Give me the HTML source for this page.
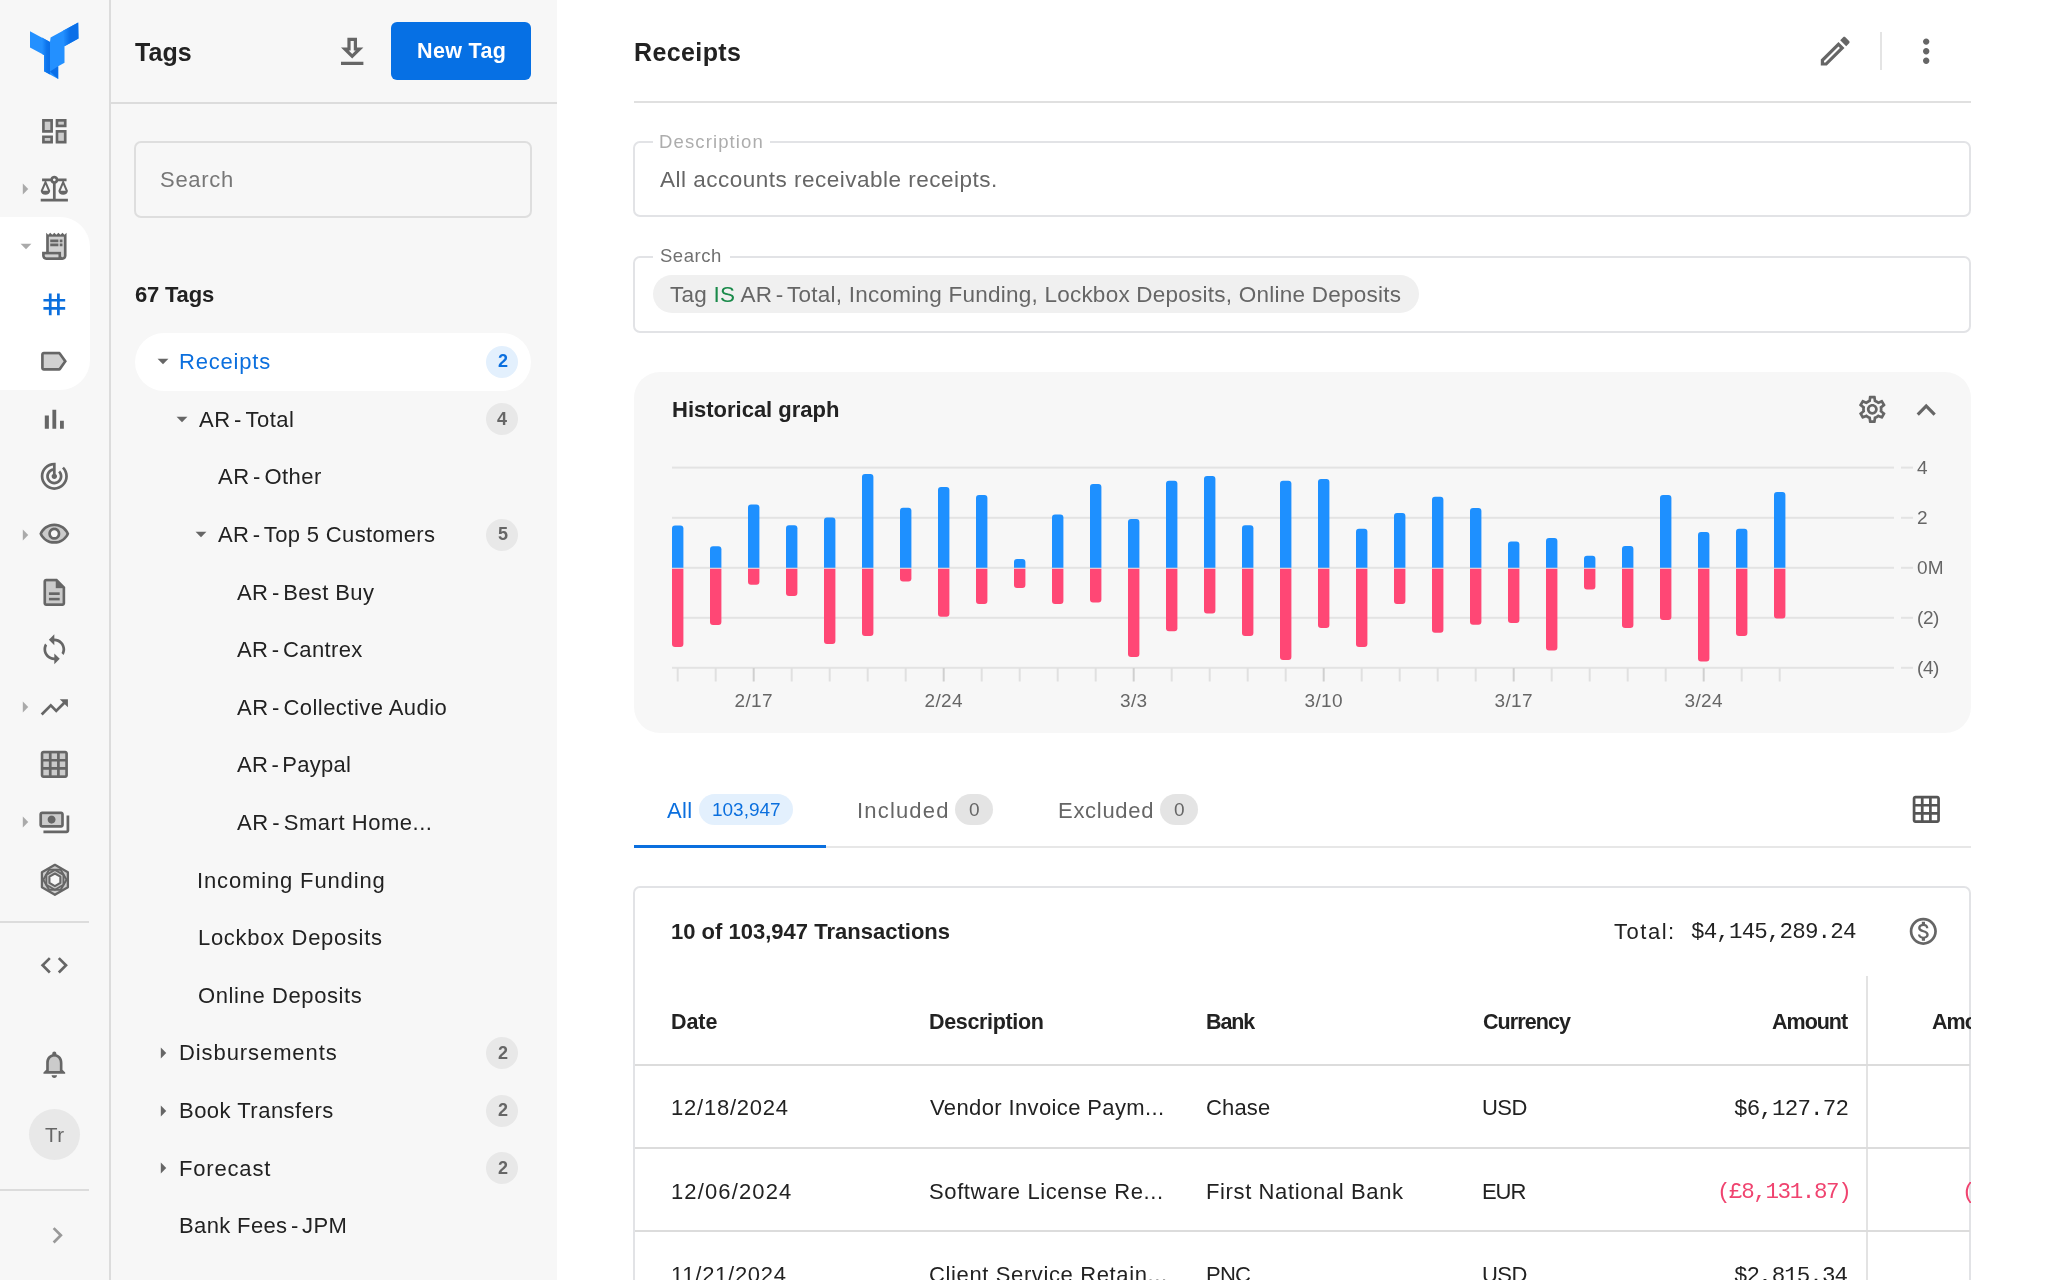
<!DOCTYPE html>
<html lang="en"><head><meta charset="utf-8"><title>Tags - Receipts</title>
<style>
html,body{margin:0;padding:0}
body{width:2048px;height:1280px;overflow:hidden;background:#fff;position:relative;font-family:"Liberation Sans",sans-serif;color:#222}
.abs,.t,.ic{position:absolute}
.t{white-space:nowrap;will-change:transform}
.ic{display:block}
#rail{left:0;top:0;width:109px;height:1280px;background:#f7f7f7}
#tags{left:111px;top:0;width:446px;height:1280px;background:#f7f7f7}
#vdiv{left:109px;top:0;width:2px;height:1280px;background:#dcdcdc}
.hl{background:#dcdcdc;height:2px}
.box{border:2px solid #e2e3e6;border-radius:7px;box-sizing:border-box}
.badge{width:32px;height:32px;border-radius:16px;background:#e8e8e8}
.badge.b{background:#e3f0fd}
.pill{border-radius:16px;height:31px}
</style></head><body>

<div id="rail" class="abs"></div><div id="tags" class="abs"></div><div id="vdiv" class="abs"></div>
<div class="abs" style="left:0;top:217px;width:90px;height:173px;background:#fff;border-radius:0 30px 30px 0"></div>
<svg class="ic" style="left:20px;top:10px;width:70px;height:80px" viewBox="20 10 70 80">
<polygon fill="#2390ff" points="50.6,37.6 78.2,22.4 78.5,38.4 64.5,46.2 64.5,62.8 58.2,66.3 58.2,78.9 44,71.3 44,55 30,47.5 30,31.2 50,41.9"/>
<defs><linearGradient id="lg1" x1="0" x2="1" y1="0" y2="0"><stop offset="0" stop-color="#2390ff"/><stop offset="0.45" stop-color="#0a6fe8"/><stop offset="1" stop-color="#0a6fe8"/></linearGradient>
<linearGradient id="lg2" x1="0" x2="1" y1="0" y2="0"><stop offset="0" stop-color="#2390ff"/><stop offset="0.6" stop-color="#0d74ec"/><stop offset="1" stop-color="#0a6fe8"/></linearGradient></defs>
<polygon fill="url(#lg1)" points="63,30.8 78.2,22.4 78.5,38.4 64.5,46.2"/>
<polygon fill="url(#lg2)" points="42,37.6 50,41.9 50,74.5 44,71.3 44,55 42,54"/>
<polygon fill="#0a6fe8" points="50,71.6 58.2,66.3 58.2,78.9"/>
</svg>
<svg class="ic" style="left:37.93px;top:114.93px;width:32.64px;height:32.64px" viewBox="0 0 24 24" fill="#666"><g opacity="0.3"><path d="M5 5h4v6H5zm10 8h4v6h-4zM5 17h4v2H5zM15 5h4v2h-4z"/></g><path d="M19 5v2h-4V5h4M9 5v6H5V5h4m10 8v6h-4v-6h4M9 17v2H5v-2h4M21 3h-8v6h8V3zM11 3H3v10h8V3zm10 8h-8v10h8V11zm-10 4H3v6h8v-6z"/></svg>
<svg class="ic" style="left:38.08px;top:172.58px;width:32.64px;height:32.64px" viewBox="0 0 24 24" fill="#666"><path d="M13 7.83c.85-.3 1.53-.98 1.83-1.83H18l-3 7c0 1.66 1.57 3 3.5 3s3.500-1.340 3.500-3l-3-7h2V4h-6.170c-.410-1.170-1.520-2-2.830-2s-2.420.830-2.830 2H3v2h2l-3 7c0 1.660 1.570 3 3.500 3S9 14.660 9 13L6 6h3.170c.3.850.980 1.530 1.830 1.830V19H2v2h20v-2h-9V7.830zM20.370 13h-3.740l1.870-4.360L20.370 13zm-13 0H3.630L5.500 8.640 7.370 13zM12 6c-.550 0-1-.450-1-1s.450-1 1-1 1 .450 1 1-.450 1-1 1z"/></svg>
<svg class="ic" style="left:11.66px;top:175.75px;width:26px;height:26px" viewBox="0 0 24 24" fill="#aaa"><path d="M10 17l5-5-5-5v10z"/></svg>
<svg class="ic" style="left:37.93px;top:230.18px;width:32.64px;height:32.64px" viewBox="0 0 24 24" fill="#666"><g opacity="0.3"><path d="M15 20H6c-.550 0-1-.450-1-1v-1h10v2zM8 5v11h9v3c0 .550.450 1 1 1s1-.450 1-1V5H8z"/></g><path d="M19.500 3.500L18 2l-1.500 1.500L15 2l-1.500 1.500L12 2l-1.500 1.500L9 2 7.500 3.500 6 2v14H3v3c0 1.660 1.340 3 3 3h12c1.660 0 3-1.340 3-3V2l-1.500 1.500zM15 20H6c-.550 0-1-.450-1-1v-1h10v2zm4-1c0 .550-.450 1-1 1s-1-.450-1-1v-3H8V5h11v14z"/><path d="M9 7h6v2H9zM16 7h2v2h-2zM9 10h6v2H9zM16 10h2v2h-2z"/></svg>
<svg class="ic" style="left:12.50px;top:232.96px;width:26px;height:26px" viewBox="0 0 24 24" fill="#aaa"><path d="M7 10l5 5 5-5z"/></svg>
<svg class="ic" style="left:38.28px;top:287.78px;width:32.64px;height:32.64px" viewBox="0 0 24 24" fill="#0b6fde"><path d="M20 10V8h-4V4h-2v4h-4V4H8v4H4v2h4v4H4v2h4v4h2v-4h4v4h2v-4h4v-2h-4v-4h4zm-6 4h-4v-4h4v4z"/></svg>
<svg class="ic" style="left:37.38px;top:344.93px;width:32.64px;height:32.64px" viewBox="0 0 24 24" fill="#666"><g opacity="0.3"><path d="M16 7H5v10h11l3.550-5z"/></g><path d="M17.630 5.840C17.270 5.330 16.670 5 16 5L5 5.010C3.900 5.010 3 5.900 3 7v10c0 1.100.9 1.990 2 1.990L16 19c.670 0 1.270-.330 1.630-.840L22 12l-4.370-6.160zM16 17H5V7h11l3.550 5L16 17z"/></svg>
<svg class="ic" style="left:38.08px;top:402.78px;width:32.64px;height:32.64px" viewBox="0 0 24 24" fill="#666"><path d="M5 9.200h3V19H5zM10.600 5h2.800v14h-2.800zm5.600 8H19v6h-2.800z"/></svg>
<svg class="ic" style="left:38.08px;top:460.28px;width:32.64px;height:32.64px" viewBox="0 0 24 24" fill="#666"><path d="M19.070 4.930l-1.410 1.410C19.100 7.790 20 9.790 20 12c0 4.420-3.580 8-8 8s-8-3.580-8-8c0-4.080 3.050-7.440 7-7.930v2.020C8.160 6.570 6 9.030 6 12c0 3.310 2.690 6 6 6s6-2.690 6-6c0-1.660-.670-3.160-1.760-4.240l-1.410 1.410C15.550 9.900 16 10.900 16 12c0 2.210-1.790 4-4 4s-4-1.790-4-4c0-1.860 1.280-3.410 3-3.860v2.140c-.6.350-1 .980-1 1.720 0 1.100.9 2 2 2s2-.9 2-2c0-.740-.4-1.380-1-1.720V2h-1C6.480 2 2 6.480 2 12s4.480 10 10 10 10-4.480 10-10c0-2.760-1.120-5.260-2.930-7.070z"/></svg>
<svg class="ic" style="left:38.08px;top:518.38px;width:32.64px;height:32.64px" viewBox="0 0 24 24" fill="#666"><g opacity="0.3"><path d="M12 6c-3.790 0-7.170 2.130-8.820 5.500C4.830 14.870 8.210 17 12 17s7.170-2.130 8.820-5.500C19.170 8.130 15.790 6 12 6zm0 10c-2.480 0-4.500-2.020-4.500-4.500S9.520 7 12 7s4.500 2.020 4.500 4.500S14.480 16 12 16z"/></g><path d="M12 6c3.790 0 7.170 2.130 8.820 5.500C19.170 14.870 15.790 17 12 17s-7.170-2.130-8.820-5.500C4.830 8.130 8.210 6 12 6m0-2C7 4 2.730 7.110 1 11.500 2.730 15.890 7 19 12 19s9.270-3.110 11-7.500C21.270 7.110 17 4 12 4zm0 5c1.380 0 2.500 1.120 2.500 2.500S13.380 14 12 14s-2.500-1.120-2.500-2.500S10.620 9 12 9m0-2c-2.480 0-4.500 2.020-4.500 4.500S9.520 16 12 16s4.500-2.020 4.500-4.500S14.480 7 12 7z"/></svg>
<svg class="ic" style="left:11.66px;top:521.70px;width:26px;height:26px" viewBox="0 0 24 24" fill="#aaa"><path d="M10 17l5-5-5-5v10z"/></svg>
<svg class="ic" style="left:38.28px;top:575.78px;width:32.64px;height:32.64px" viewBox="0 0 24 24" fill="#666"><g opacity="0.3"><path d="M13 4H6v16h12V9h-5V4zm3 14H8v-2h8v2zm0-6v2H8v-2h8z"/></g><path d="M8 16h8v2H8zm0-4h8v2H8zm6-10H6c-1.100 0-2 .9-2 2v16c0 1.100.890 2 1.990 2H18c1.100 0 2-.9 2-2V8l-6-6zm4 18H6V4h7v5h5v11z"/></svg>
<svg class="ic" style="left:38.08px;top:633.43px;width:32.64px;height:32.64px" viewBox="0 0 24 24" fill="#666"><path d="M12 4V1L8 5l4 4V6c3.310 0 6 2.690 6 6 0 1.010-.250 1.970-.7 2.800l1.460 1.460C19.540 15.030 20 13.570 20 12c0-4.420-3.580-8-8-8zm0 14c-3.310 0-6-2.690-6-6 0-1.010.250-1.970.7-2.800L5.240 7.740C4.460 8.970 4 10.430 4 12c0 4.420 3.580 8 8 8v3l4-4-4-4v3z"/></svg>
<svg class="ic" style="left:38.08px;top:690.58px;width:32.64px;height:32.64px" viewBox="0 0 24 24" fill="#666"><path d="M16 6l2.290 2.290-4.880 4.880-4-4L2 16.590 3.410 18l6-6 4 4 6.300-6.290L22 12V6z"/></svg>
<svg class="ic" style="left:11.66px;top:693.90px;width:26px;height:26px" viewBox="0 0 24 24" fill="#aaa"><path d="M10 17l5-5-5-5v10z"/></svg>
<svg class="ic" style="left:38.08px;top:748.43px;width:32.64px;height:32.64px" viewBox="0 0 24 24" fill="#666"><g opacity="0.3"><path d="M4 4h16v16H4z"/></g><path d="M20 2H4c-1.100 0-2 .9-2 2v16c0 1.100.9 2 2 2h16c1.100 0 2-.9 2-2V4c0-1.100-.9-2-2-2zM8 20H4v-4h4v4zm0-6H4v-4h4v4zm0-6H4V4h4v4zm6 12h-4v-4h4v4zm0-6h-4v-4h4v4zm0-6h-4V4h4v4zm6 12h-4v-4h4v4zm0-6h-4v-4h4v4zm0-6h-4V4h4v4z"/></svg>
<svg class="ic" style="left:38.18px;top:805.78px;width:32.64px;height:32.64px" viewBox="0 0 24 24" fill="#666"><g opacity="0.3"><path d="M17 6H3v8h14V6zm-7 7c-1.660 0-3-1.340-3-3s1.340-3 3-3 3 1.340 3 3-1.340 3-3 3z"/></g><path d="M19 14V6c0-1.100-.9-2-2-2H3c-1.100 0-2 .9-2 2v8c0 1.100.9 2 2 2h14c1.100 0 2-.9 2-2zm-2 0H3V6h14v8zm-7-7c-1.660 0-3 1.340-3 3s1.340 3 3 3 3-1.340 3-3-1.340-3-3-3zm13 0v11c0 1.100-.9 2-2 2H4v-2h17V7h2z"/></svg>
<svg class="ic" style="left:11.66px;top:809.10px;width:26px;height:26px" viewBox="0 0 24 24" fill="#aaa"><path d="M10 17l5-5-5-5v10z"/></svg>
<svg class="ic" style="left:34px;top:859px;width:42px;height:42px" viewBox="34 859 42 42"><polygon points="67.89,887.30 54.90,894.80 41.91,887.30 41.91,872.30 54.90,864.80 67.89,872.30" fill="#666" fill-opacity="0.3" stroke="#666" stroke-width="2.3" stroke-linejoin="round"/><polygon points="66.50,879.80 60.70,889.85 49.10,889.85 43.30,879.80 49.10,869.75 60.70,869.75" fill="none" stroke="#666" stroke-width="2" stroke-linejoin="round"/><polygon points="63.47,884.75 54.90,889.70 46.33,884.75 46.33,874.85 54.90,869.90 63.47,874.85" fill="none" stroke="#666" stroke-width="1.9" stroke-linejoin="round"/><polygon points="60.36,882.95 54.90,886.10 49.44,882.95 49.44,876.65 54.90,873.50 60.36,876.65" fill="#f7f7f7" stroke="#666" stroke-width="2.1" stroke-linejoin="round"/></svg>
<div class="abs hl" style="left:0;top:921px;width:89px"></div>
<svg class="ic" style="left:37.98px;top:948.68px;width:32.64px;height:32.64px" viewBox="0 0 24 24" fill="#666"><path d="M9.400 16.600L4.800 12l4.600-4.600L8 6l-6 6 6 6 1.400-1.400zm5.200 0l4.600-4.600-4.600-4.600L16 6l6 6-6 6-1.400-1.400z"/></svg>
<svg class="ic" style="left:38.18px;top:1047.88px;width:32.64px;height:32.64px" viewBox="0 0 24 24" fill="#666"><g opacity="0.3"><path d="M12 6.500c-2.490 0-4 2.020-4 4.500v6h8v-6c0-2.480-1.510-4.500-4-4.500z"/></g><path d="M12 22c1.100 0 2-.9 2-2h-4c0 1.100.9 2 2 2zm6-6v-5c0-3.070-1.630-5.640-4.500-6.320V4c0-.830-.670-1.500-1.500-1.500s-1.500.670-1.500 1.500v.680C7.640 5.360 6 7.920 6 11v5l-2 2v1h16v-1l-2-2zm-2 1H8v-6c0-2.480 1.510-4.500 4-4.500s4 2.020 4 4.500v6z"/></svg>
<div class="abs" style="left:28.8px;top:1108.7px;width:51.4px;height:51.4px;border-radius:26px;background:#e8e8e8"></div>
<div class="t" style="left:44.50px;top:1121.40px;font:400 20.5px/27px 'Liberation Sans', sans-serif;color:#666;letter-spacing:0.539px;">Tr</div>
<div class="abs hl" style="left:0;top:1188.5px;width:89px"></div>
<svg class="ic" style="left:40.88px;top:1219.18px;width:32.64px;height:32.64px" viewBox="0 0 24 24" fill="#999"><path d="M10 6L8.590 7.410 13.170 12l-4.580 4.590L10 18l6-6z"/></svg>
<div class="t" style="left:134.60px;top:35.74px;font:700 25px/32px 'Liberation Sans', sans-serif;color:#222;letter-spacing:0.070px;">Tags</div>
<svg class="ic" style="left:332.70px;top:32.80px;width:38.4px;height:38.4px" viewBox="0 0 24 24" fill="#666"><path d="M19 9h-4V3H9v6H5l7 7 7-7zm-8 2V5h2v6h1.170L12 13.170 9.830 11H11zm-6 7h14v2H5z"/></svg>
<div class="abs" style="left:390.5px;top:22.4px;width:140.7px;height:57.4px;border-radius:6px;background:#0670e4"></div>
<div class="t" style="left:416.60px;top:37.45px;font:700 21.5px/28px 'Liberation Sans', sans-serif;color:#fff;letter-spacing:0.354px;">New Tag</div>
<div class="abs hl" style="left:110px;top:102px;width:447px"></div>
<div class="abs box" style="left:134px;top:141px;width:398px;height:77px;border-color:#dedede"></div>
<div class="t" style="left:159.50px;top:165.08px;font:400 22px/29px 'Liberation Sans', sans-serif;color:#777;letter-spacing:0.706px;">Search</div>
<div class="t" style="left:135.00px;top:280.18px;font:700 22px/29px 'Liberation Sans', sans-serif;color:#222;letter-spacing:-0.194px;">67 Tags</div>
<div class="abs" style="left:134.6px;top:332.8px;width:396.6px;height:58px;border-radius:29px;background:#fff"></div>
<div class="t" style="left:179.30px;top:347.08px;font:400 22px/29px 'Liberation Sans', sans-serif;color:#0b6fde;letter-spacing:0.815px;">Receipts</div>
<svg class="ic" style="left:150.00px;top:348.30px;width:26px;height:26px" viewBox="0 0 24 24" fill="#666"><path d="M7 10l5 5 5-5z"/></svg>
<div class="abs badge b" style="left:486.2px;top:345.70px"></div>
<div class="t" style="left:497.70px;top:350.46px;font:700 18px/23px 'Liberation Sans', sans-serif;color:#0b6fde;letter-spacing:0.000px;">2</div>
<div class="t" style="left:199.30px;top:404.69px;font:400 22px/29px 'Liberation Sans', sans-serif;color:#222;letter-spacing:0.478px;">AR<span style="word-spacing:-3px"> - </span>Total</div>
<svg class="ic" style="left:169.00px;top:405.91px;width:26px;height:26px" viewBox="0 0 24 24" fill="#666"><path d="M7 10l5 5 5-5z"/></svg>
<div class="abs badge" style="left:486.2px;top:403.31px"></div>
<div class="t" style="left:497.20px;top:408.07px;font:700 18px/23px 'Liberation Sans', sans-serif;color:#666;letter-spacing:0.000px;">4</div>
<div class="t" style="left:218.30px;top:462.30px;font:400 22px/29px 'Liberation Sans', sans-serif;color:#222;letter-spacing:0.466px;">AR<span style="word-spacing:-3px"> - </span>Other</div>
<div class="t" style="left:218.30px;top:519.91px;font:400 22px/29px 'Liberation Sans', sans-serif;color:#222;letter-spacing:0.347px;">AR<span style="word-spacing:-3px"> - </span>Top 5 Customers</div>
<svg class="ic" style="left:188.00px;top:521.13px;width:26px;height:26px" viewBox="0 0 24 24" fill="#666"><path d="M7 10l5 5 5-5z"/></svg>
<div class="abs badge" style="left:486.2px;top:518.53px"></div>
<div class="t" style="left:497.70px;top:523.29px;font:700 18px/23px 'Liberation Sans', sans-serif;color:#666;letter-spacing:0.000px;">5</div>
<div class="t" style="left:237.30px;top:577.52px;font:400 22px/29px 'Liberation Sans', sans-serif;color:#222;letter-spacing:0.404px;">AR<span style="word-spacing:-3px"> - </span>Best Buy</div>
<div class="t" style="left:237.30px;top:635.13px;font:400 22px/29px 'Liberation Sans', sans-serif;color:#222;letter-spacing:0.378px;">AR<span style="word-spacing:-3px"> - </span>Cantrex</div>
<div class="t" style="left:237.30px;top:692.74px;font:400 22px/29px 'Liberation Sans', sans-serif;color:#222;letter-spacing:0.459px;">AR<span style="word-spacing:-3px"> - </span>Collective Audio</div>
<div class="t" style="left:237.30px;top:750.35px;font:400 22px/29px 'Liberation Sans', sans-serif;color:#222;letter-spacing:0.241px;">AR<span style="word-spacing:-3px"> - </span>Paypal</div>
<div class="t" style="left:237.30px;top:807.96px;font:400 22px/29px 'Liberation Sans', sans-serif;color:#222;letter-spacing:0.529px;">AR<span style="word-spacing:-3px"> - </span>Smart Home...</div>
<div class="t" style="left:197.30px;top:865.57px;font:400 22px/29px 'Liberation Sans', sans-serif;color:#222;letter-spacing:0.857px;">Incoming Funding</div>
<div class="t" style="left:198.30px;top:923.18px;font:400 22px/29px 'Liberation Sans', sans-serif;color:#222;letter-spacing:0.690px;">Lockbox Deposits</div>
<div class="t" style="left:198.30px;top:980.79px;font:400 22px/29px 'Liberation Sans', sans-serif;color:#222;letter-spacing:0.607px;">Online Deposits</div>
<div class="t" style="left:179.30px;top:1038.40px;font:400 22px/29px 'Liberation Sans', sans-serif;color:#222;letter-spacing:0.915px;">Disbursements</div>
<svg class="ic" style="left:149.50px;top:1040.12px;width:26px;height:26px" viewBox="0 0 24 24" fill="#666"><path d="M10 17l5-5-5-5v10z"/></svg>
<div class="abs badge" style="left:486.2px;top:1037.02px"></div>
<div class="t" style="left:497.70px;top:1041.78px;font:700 18px/23px 'Liberation Sans', sans-serif;color:#666;letter-spacing:0.000px;">2</div>
<div class="t" style="left:179.30px;top:1096.01px;font:400 22px/29px 'Liberation Sans', sans-serif;color:#222;letter-spacing:0.481px;">Book Transfers</div>
<svg class="ic" style="left:149.50px;top:1097.73px;width:26px;height:26px" viewBox="0 0 24 24" fill="#666"><path d="M10 17l5-5-5-5v10z"/></svg>
<div class="abs badge" style="left:486.2px;top:1094.63px"></div>
<div class="t" style="left:497.70px;top:1099.39px;font:700 18px/23px 'Liberation Sans', sans-serif;color:#666;letter-spacing:0.000px;">2</div>
<div class="t" style="left:179.30px;top:1153.62px;font:400 22px/29px 'Liberation Sans', sans-serif;color:#222;letter-spacing:0.818px;">Forecast</div>
<svg class="ic" style="left:149.50px;top:1155.34px;width:26px;height:26px" viewBox="0 0 24 24" fill="#666"><path d="M10 17l5-5-5-5v10z"/></svg>
<div class="abs badge" style="left:486.2px;top:1152.24px"></div>
<div class="t" style="left:497.70px;top:1157.00px;font:700 18px/23px 'Liberation Sans', sans-serif;color:#666;letter-spacing:0.000px;">2</div>
<div class="t" style="left:179.30px;top:1211.23px;font:400 22px/29px 'Liberation Sans', sans-serif;color:#222;letter-spacing:0.365px;">Bank Fees<span style="word-spacing:-3px"> - </span>JPM</div>
<div class="t" style="left:633.50px;top:36.34px;font:700 25px/32px 'Liberation Sans', sans-serif;color:#222;letter-spacing:0.385px;">Receipts</div>
<svg class="ic" style="left:1816.40px;top:32.05px;width:38.4px;height:38.4px" viewBox="0 0 24 24" fill="#666"><path d="M14.060 9.020l.920.920L5.920 19H5v-.920l9.060-9.060M17.660 3c-.250 0-.510.100-.7.290l-1.830 1.830 3.750 3.750 1.830-1.830c.390-.390.390-1.020 0-1.410l-2.340-2.340c-.200-.200-.450-.290-.710-.290zm-3.600 3.190L3 17.250V21h3.750L17.810 9.940l-3.750-3.750z"/></svg>
<div class="abs" style="left:1880px;top:32px;width:2px;height:38px;background:#e4e4e4"></div>
<svg class="ic" style="left:1907.20px;top:31.85px;width:38.4px;height:38.4px" viewBox="0 0 24 24" fill="#666"><path d="M12 8c1.100 0 2-.9 2-2s-.9-2-2-2-2 .9-2 2 .9 2 2 2zm0 2c-1.100 0-2 .9-2 2s.9 2 2 2 2-.9 2-2-.9-2-2-2zm0 6c-1.100 0-2 .9-2 2s.9 2 2 2 2-.9 2-2-.9-2-2-2z"/></svg>
<div class="abs hl" style="left:634px;top:101px;width:1337px;background:#e0e0e0"></div>
<div class="abs box" style="left:633px;top:141px;width:1338px;height:76px"></div>
<div class="abs" style="left:653px;top:139px;width:117px;height:6px;background:#fff"></div>
<div class="t" style="left:658.90px;top:130.49px;font:400 18.5px/24px 'Liberation Sans', sans-serif;color:#adadad;letter-spacing:1.125px;">Description</div>
<div class="t" style="left:659.70px;top:165.10px;font:400 22.5px/29px 'Liberation Sans', sans-serif;color:#666;letter-spacing:0.495px;">All accounts receivable receipts.</div>
<div class="abs box" style="left:633px;top:256px;width:1338px;height:77px"></div>
<div class="abs" style="left:653px;top:254px;width:77px;height:6px;background:#fff"></div>
<div class="t" style="left:660.30px;top:244.19px;font:400 18.5px/24px 'Liberation Sans', sans-serif;color:#707070;letter-spacing:0.534px;">Search</div>
<div class="abs" style="left:653px;top:275.3px;width:766px;height:38px;border-radius:19px;background:#f0f0f0"></div>
<div class="t" style="left:670.00px;top:280.30px;font:400 22.5px/29px 'Liberation Sans', sans-serif;color:#666;letter-spacing:0.241px;">Tag <span style="color:#1a8a4a">IS</span> AR<span style="word-spacing:-3px"> - </span>Total, Incoming Funding, Lockbox Deposits, Online Deposits</div>
<div class="abs" style="left:634px;top:372px;width:1337px;height:360.5px;border-radius:26px;background:#f7f7f7"></div>
<div class="t" style="left:672.00px;top:395.28px;font:700 22px/29px 'Liberation Sans', sans-serif;color:#222;letter-spacing:-0.003px;">Historical graph</div>
<svg class="ic" style="left:1855.78px;top:393.28px;width:32.64px;height:32.64px" viewBox="0 0 24 24" fill="#666"><path d="M19.430 12.980c.040-.320.070-.640.070-.980 0-.340-.030-.660-.070-.980l2.110-1.650c.190-.150.240-.420.120-.640l-2-3.460c-.090-.160-.260-.250-.440-.250-.060 0-.120.010-.170.030l-2.490 1c-.520-.400-1.080-.730-1.690-.980l-.380-2.650C14.460 2.180 14.250 2 14 2h-4c-.250 0-.460.180-.490.420l-.380 2.650c-.610.250-1.170.590-1.690.980l-2.490-1c-.060-.020-.120-.030-.180-.030-.170 0-.340.090-.430.250l-2 3.460c-.130.220-.070.490.120.640l2.110 1.650c-.040.320-.070.650-.07.980 0 .330.030.660.070.980l-2.110 1.650c-.190.150-.240.420-.120.640l2 3.460c.090.160.260.250.440.250.060 0 .120-.010.170-.030l2.490-1c.520.400 1.080.730 1.690.980l.380 2.650c.030.240.240.420.490.420h4c.250 0 .460-.180.490-.420l.380-2.650c.610-.250 1.170-.590 1.690-.980l2.490 1c.060.020.120.030.180.030.170 0 .340-.090.430-.250l2-3.460c.120-.220.070-.490-.120-.640l-2.110-1.650zm-1.980-1.710c.040.310.050.520.050.730 0 .210-.020.430-.050.730l-.140 1.130.890.700 1.080.840-.7 1.210-1.270-.510-1.040-.420-.9.680c-.430.320-.840.560-1.250.730l-1.060.430-.160 1.130-.200 1.350h-1.400l-.190-1.350-.160-1.130-1.060-.430c-.430-.180-.830-.410-1.230-.710l-.910-.7-1.060.430-1.270.510-.7-1.210 1.080-.840.890-.7-.140-1.130c-.030-.310-.050-.540-.050-.740s.020-.430.050-.730l.140-1.130-.890-.7-1.080-.840.7-1.210 1.270.510 1.040.420.900-.680c.430-.320.840-.560 1.250-.730l1.060-.430.160-1.130.200-1.350h1.390l.190 1.350.160 1.130 1.060.430c.430.180.830.410 1.230.710l.910.700 1.060-.430 1.270-.510.7 1.210-1.070.850-.890.700.140 1.130zM12 8c-2.210 0-4 1.790-4 4s1.790 4 4 4 4-1.790 4-4-1.790-4-4-4zm0 6c-1.100 0-2-.9-2-2s.9-2 2-2 2 .9 2 2-.9 2-2 2z"/></svg>
<svg class="ic" style="left:1907.20px;top:390.90px;width:38.4px;height:38.4px" viewBox="0 0 24 24" fill="#666"><path d="M12 8l-6 6 1.410 1.410L12 10.830l4.590 4.580L18 14z"/></svg>
<svg class="ic" style="left:634px;top:372px;width:1337px;height:360px" viewBox="634 372 1337 360">
<rect x="672" y="466.6" width="1222" height="2" fill="#e3e3e3"/>
<rect x="1901" y="466.6" width="12" height="2" fill="#e3e3e3"/>
<rect x="672" y="516.8" width="1222" height="2" fill="#e3e3e3"/>
<rect x="1901" y="516.8" width="12" height="2" fill="#e3e3e3"/>
<rect x="672" y="566.8" width="1222" height="2" fill="#e3e3e3"/>
<rect x="1901" y="566.8" width="12" height="2" fill="#e3e3e3"/>
<rect x="672" y="616.8" width="1222" height="2" fill="#e3e3e3"/>
<rect x="1901" y="616.8" width="12" height="2" fill="#e3e3e3"/>
<rect x="672" y="666.8" width="1222" height="2" fill="#e3e3e3"/>
<rect x="1901" y="666.8" width="12" height="2" fill="#e3e3e3"/>
<rect x="676.7" y="668" width="2" height="13.5" fill="#e0e0e0"/>
<path fill="#1e90ff" d="M672.0 567.7V528.6a3 3 0 0 1 3 -3h5.4a3 3 0 0 1 3 3V567.7z"/>
<path fill="#ff4775" d="M672.0 568.7V644.1a3 3 0 0 0 3 3h5.4a3 3 0 0 0 3 -3V568.7z"/>
<rect x="714.7" y="668" width="2" height="13.5" fill="#e0e0e0"/>
<path fill="#1e90ff" d="M710.0 567.7V549.2a3 3 0 0 1 3 -3h5.4a3 3 0 0 1 3 3V567.7z"/>
<path fill="#ff4775" d="M710.0 568.7V622.0a3 3 0 0 0 3 3h5.4a3 3 0 0 0 3 -3V568.7z"/>
<rect x="752.7" y="668" width="2" height="13.5" fill="#d0d0d0"/>
<path fill="#1e90ff" d="M748.0 567.7V507.6a3 3 0 0 1 3 -3h5.4a3 3 0 0 1 3 3V567.7z"/>
<path fill="#ff4775" d="M748.0 568.7V581.7a3 3 0 0 0 3 3h5.4a3 3 0 0 0 3 -3V568.7z"/>
<rect x="790.7" y="668" width="2" height="13.5" fill="#e0e0e0"/>
<path fill="#1e90ff" d="M786.0 567.7V528.2a3 3 0 0 1 3 -3h5.4a3 3 0 0 1 3 3V567.7z"/>
<path fill="#ff4775" d="M786.0 568.7V593.0a3 3 0 0 0 3 3h5.4a3 3 0 0 0 3 -3V568.7z"/>
<rect x="828.7" y="668" width="2" height="13.5" fill="#e0e0e0"/>
<path fill="#1e90ff" d="M824.0 567.7V520.4a3 3 0 0 1 3 -3h5.4a3 3 0 0 1 3 3V567.7z"/>
<path fill="#ff4775" d="M824.0 568.7V641.0a3 3 0 0 0 3 3h5.4a3 3 0 0 0 3 -3V568.7z"/>
<rect x="866.7" y="668" width="2" height="13.5" fill="#e0e0e0"/>
<path fill="#1e90ff" d="M862.0 567.7V477.0a3 3 0 0 1 3 -3h5.4a3 3 0 0 1 3 3V567.7z"/>
<path fill="#ff4775" d="M862.0 568.7V633.0a3 3 0 0 0 3 3h5.4a3 3 0 0 0 3 -3V568.7z"/>
<rect x="904.7" y="668" width="2" height="13.5" fill="#e0e0e0"/>
<path fill="#1e90ff" d="M900.0 567.7V510.8a3 3 0 0 1 3 -3h5.4a3 3 0 0 1 3 3V567.7z"/>
<path fill="#ff4775" d="M900.0 568.7V578.5a3 3 0 0 0 3 3h5.4a3 3 0 0 0 3 -3V568.7z"/>
<rect x="942.7" y="668" width="2" height="13.5" fill="#d0d0d0"/>
<path fill="#1e90ff" d="M938.0 567.7V490.0a3 3 0 0 1 3 -3h5.4a3 3 0 0 1 3 3V567.7z"/>
<path fill="#ff4775" d="M938.0 568.7V613.8a3 3 0 0 0 3 3h5.4a3 3 0 0 0 3 -3V568.7z"/>
<rect x="980.7" y="668" width="2" height="13.5" fill="#e0e0e0"/>
<path fill="#1e90ff" d="M976.0 567.7V498.0a3 3 0 0 1 3 -3h5.4a3 3 0 0 1 3 3V567.7z"/>
<path fill="#ff4775" d="M976.0 568.7V601.0a3 3 0 0 0 3 3h5.4a3 3 0 0 0 3 -3V568.7z"/>
<rect x="1018.7" y="668" width="2" height="13.5" fill="#e0e0e0"/>
<path fill="#1e90ff" d="M1014.0 567.7V562.0a3 3 0 0 1 3 -3h5.4a3 3 0 0 1 3 3V567.7z"/>
<path fill="#ff4775" d="M1014.0 568.7V585.0a3 3 0 0 0 3 3h5.4a3 3 0 0 0 3 -3V568.7z"/>
<rect x="1056.7" y="668" width="2" height="13.5" fill="#e0e0e0"/>
<path fill="#1e90ff" d="M1052.0 567.7V517.4a3 3 0 0 1 3 -3h5.4a3 3 0 0 1 3 3V567.7z"/>
<path fill="#ff4775" d="M1052.0 568.7V601.0a3 3 0 0 0 3 3h5.4a3 3 0 0 0 3 -3V568.7z"/>
<rect x="1094.7" y="668" width="2" height="13.5" fill="#e0e0e0"/>
<path fill="#1e90ff" d="M1090.0 567.7V487.0a3 3 0 0 1 3 -3h5.4a3 3 0 0 1 3 3V567.7z"/>
<path fill="#ff4775" d="M1090.0 568.7V599.5a3 3 0 0 0 3 3h5.4a3 3 0 0 0 3 -3V568.7z"/>
<rect x="1132.7" y="668" width="2" height="13.5" fill="#d0d0d0"/>
<path fill="#1e90ff" d="M1128.0 567.7V522.0a3 3 0 0 1 3 -3h5.4a3 3 0 0 1 3 3V567.7z"/>
<path fill="#ff4775" d="M1128.0 568.7V653.9a3 3 0 0 0 3 3h5.4a3 3 0 0 0 3 -3V568.7z"/>
<rect x="1170.7" y="668" width="2" height="13.5" fill="#e0e0e0"/>
<path fill="#1e90ff" d="M1166.0 567.7V483.8a3 3 0 0 1 3 -3h5.4a3 3 0 0 1 3 3V567.7z"/>
<path fill="#ff4775" d="M1166.0 568.7V628.2a3 3 0 0 0 3 3h5.4a3 3 0 0 0 3 -3V568.7z"/>
<rect x="1208.7" y="668" width="2" height="13.5" fill="#e0e0e0"/>
<path fill="#1e90ff" d="M1204.0 567.7V479.0a3 3 0 0 1 3 -3h5.4a3 3 0 0 1 3 3V567.7z"/>
<path fill="#ff4775" d="M1204.0 568.7V610.6a3 3 0 0 0 3 3h5.4a3 3 0 0 0 3 -3V568.7z"/>
<rect x="1246.7" y="668" width="2" height="13.5" fill="#e0e0e0"/>
<path fill="#1e90ff" d="M1242.0 567.7V528.2a3 3 0 0 1 3 -3h5.4a3 3 0 0 1 3 3V567.7z"/>
<path fill="#ff4775" d="M1242.0 568.7V633.0a3 3 0 0 0 3 3h5.4a3 3 0 0 0 3 -3V568.7z"/>
<rect x="1284.7" y="668" width="2" height="13.5" fill="#e0e0e0"/>
<path fill="#1e90ff" d="M1280.0 567.7V483.8a3 3 0 0 1 3 -3h5.4a3 3 0 0 1 3 3V567.7z"/>
<path fill="#ff4775" d="M1280.0 568.7V657.0a3 3 0 0 0 3 3h5.4a3 3 0 0 0 3 -3V568.7z"/>
<rect x="1322.7" y="668" width="2" height="13.5" fill="#d0d0d0"/>
<path fill="#1e90ff" d="M1318.0 567.7V482.0a3 3 0 0 1 3 -3h5.4a3 3 0 0 1 3 3V567.7z"/>
<path fill="#ff4775" d="M1318.0 568.7V625.0a3 3 0 0 0 3 3h5.4a3 3 0 0 0 3 -3V568.7z"/>
<rect x="1360.7" y="668" width="2" height="13.5" fill="#e0e0e0"/>
<path fill="#1e90ff" d="M1356.0 567.7V531.8a3 3 0 0 1 3 -3h5.4a3 3 0 0 1 3 3V567.7z"/>
<path fill="#ff4775" d="M1356.0 568.7V644.0a3 3 0 0 0 3 3h5.4a3 3 0 0 0 3 -3V568.7z"/>
<rect x="1398.7" y="668" width="2" height="13.5" fill="#e0e0e0"/>
<path fill="#1e90ff" d="M1394.0 567.7V515.9a3 3 0 0 1 3 -3h5.4a3 3 0 0 1 3 3V567.7z"/>
<path fill="#ff4775" d="M1394.0 568.7V601.0a3 3 0 0 0 3 3h5.4a3 3 0 0 0 3 -3V568.7z"/>
<rect x="1436.7" y="668" width="2" height="13.5" fill="#e0e0e0"/>
<path fill="#1e90ff" d="M1432.0 567.7V499.8a3 3 0 0 1 3 -3h5.4a3 3 0 0 1 3 3V567.7z"/>
<path fill="#ff4775" d="M1432.0 568.7V629.7a3 3 0 0 0 3 3h5.4a3 3 0 0 0 3 -3V568.7z"/>
<rect x="1474.7" y="668" width="2" height="13.5" fill="#e0e0e0"/>
<path fill="#1e90ff" d="M1470.0 567.7V511.0a3 3 0 0 1 3 -3h5.4a3 3 0 0 1 3 3V567.7z"/>
<path fill="#ff4775" d="M1470.0 568.7V621.8a3 3 0 0 0 3 3h5.4a3 3 0 0 0 3 -3V568.7z"/>
<rect x="1512.7" y="668" width="2" height="13.5" fill="#d0d0d0"/>
<path fill="#1e90ff" d="M1508.0 567.7V544.4a3 3 0 0 1 3 -3h5.4a3 3 0 0 1 3 3V567.7z"/>
<path fill="#ff4775" d="M1508.0 568.7V620.1a3 3 0 0 0 3 3h5.4a3 3 0 0 0 3 -3V568.7z"/>
<rect x="1550.7" y="668" width="2" height="13.5" fill="#e0e0e0"/>
<path fill="#1e90ff" d="M1546.0 567.7V541.0a3 3 0 0 1 3 -3h5.4a3 3 0 0 1 3 3V567.7z"/>
<path fill="#ff4775" d="M1546.0 568.7V647.5a3 3 0 0 0 3 3h5.4a3 3 0 0 0 3 -3V568.7z"/>
<rect x="1588.7" y="668" width="2" height="13.5" fill="#e0e0e0"/>
<path fill="#1e90ff" d="M1584.0 567.7V558.8a3 3 0 0 1 3 -3h5.4a3 3 0 0 1 3 3V567.7z"/>
<path fill="#ff4775" d="M1584.0 568.7V586.6a3 3 0 0 0 3 3h5.4a3 3 0 0 0 3 -3V568.7z"/>
<rect x="1626.7" y="668" width="2" height="13.5" fill="#e0e0e0"/>
<path fill="#1e90ff" d="M1622.0 567.7V549.0a3 3 0 0 1 3 -3h5.4a3 3 0 0 1 3 3V567.7z"/>
<path fill="#ff4775" d="M1622.0 568.7V625.0a3 3 0 0 0 3 3h5.4a3 3 0 0 0 3 -3V568.7z"/>
<rect x="1664.7" y="668" width="2" height="13.5" fill="#e0e0e0"/>
<path fill="#1e90ff" d="M1660.0 567.7V498.0a3 3 0 0 1 3 -3h5.4a3 3 0 0 1 3 3V567.7z"/>
<path fill="#ff4775" d="M1660.0 568.7V617.0a3 3 0 0 0 3 3h5.4a3 3 0 0 0 3 -3V568.7z"/>
<rect x="1702.7" y="668" width="2" height="13.5" fill="#d0d0d0"/>
<path fill="#1e90ff" d="M1698.0 567.7V535.0a3 3 0 0 1 3 -3h5.4a3 3 0 0 1 3 3V567.7z"/>
<path fill="#ff4775" d="M1698.0 568.7V658.6a3 3 0 0 0 3 3h5.4a3 3 0 0 0 3 -3V568.7z"/>
<rect x="1740.7" y="668" width="2" height="13.5" fill="#e0e0e0"/>
<path fill="#1e90ff" d="M1736.0 567.7V531.8a3 3 0 0 1 3 -3h5.4a3 3 0 0 1 3 3V567.7z"/>
<path fill="#ff4775" d="M1736.0 568.7V633.0a3 3 0 0 0 3 3h5.4a3 3 0 0 0 3 -3V568.7z"/>
<rect x="1778.7" y="668" width="2" height="13.5" fill="#e0e0e0"/>
<path fill="#1e90ff" d="M1774.0 567.7V494.9a3 3 0 0 1 3 -3h5.4a3 3 0 0 1 3 3V567.7z"/>
<path fill="#ff4775" d="M1774.0 568.7V615.4a3 3 0 0 0 3 3h5.4a3 3 0 0 0 3 -3V568.7z"/>
<text x="753.7" y="707.4" text-anchor="middle" font-family="Liberation Sans, sans-serif" font-size="19" letter-spacing="0.3" fill="#666">2/17</text>
<text x="943.7" y="707.4" text-anchor="middle" font-family="Liberation Sans, sans-serif" font-size="19" letter-spacing="0.3" fill="#666">2/24</text>
<text x="1133.7" y="707.4" text-anchor="middle" font-family="Liberation Sans, sans-serif" font-size="19" letter-spacing="0.3" fill="#666">3/3</text>
<text x="1323.7" y="707.4" text-anchor="middle" font-family="Liberation Sans, sans-serif" font-size="19" letter-spacing="0.3" fill="#666">3/10</text>
<text x="1513.7" y="707.4" text-anchor="middle" font-family="Liberation Sans, sans-serif" font-size="19" letter-spacing="0.3" fill="#666">3/17</text>
<text x="1703.7" y="707.4" text-anchor="middle" font-family="Liberation Sans, sans-serif" font-size="19" letter-spacing="0.3" fill="#666">3/24</text>
<text x="1917" y="474.1" font-family="Liberation Sans, sans-serif" font-size="19" letter-spacing="0.3" fill="#666">4</text>
<text x="1917" y="524.3" font-family="Liberation Sans, sans-serif" font-size="19" letter-spacing="0.3" fill="#666">2</text>
<text x="1917" y="574.3" font-family="Liberation Sans, sans-serif" font-size="19" letter-spacing="0.3" fill="#666">0M</text>
<text x="1917" y="624.3" font-family="Liberation Sans, sans-serif" font-size="19" letter-spacing="-0.4" fill="#666">(2)</text>
<text x="1917" y="674.3" font-family="Liberation Sans, sans-serif" font-size="19" letter-spacing="-0.4" fill="#666">(4)</text>
</svg>
<div class="abs hl" style="left:634px;top:846px;width:1337px;background:#e7e7e7"></div>
<div class="abs" style="left:633.5px;top:844.5px;width:192px;height:3.8px;background:#0b6fde"></div>
<div class="t" style="left:666.60px;top:795.68px;font:400 22px/29px 'Liberation Sans', sans-serif;color:#0b6fde;letter-spacing:0.369px;">All</div>
<div class="abs pill" style="left:699.4px;top:794px;width:93.8px;background:#e3f0fd"></div>
<div class="t" style="left:711.90px;top:797.22px;font:400 19px/25px 'Liberation Sans', sans-serif;color:#0b6fde;letter-spacing:-0.019px;">103,947</div>
<div class="t" style="left:857.10px;top:795.68px;font:400 22px/29px 'Liberation Sans', sans-serif;color:#666;letter-spacing:1.180px;">Included</div>
<div class="abs pill" style="left:955.2px;top:794px;width:38.1px;background:#e4e4e4"></div>
<div class="t" style="left:969.30px;top:797.22px;font:400 19px/25px 'Liberation Sans', sans-serif;color:#666;letter-spacing:0.000px;">0</div>
<div class="t" style="left:1058.20px;top:795.68px;font:400 22px/29px 'Liberation Sans', sans-serif;color:#666;letter-spacing:0.705px;">Excluded</div>
<div class="abs pill" style="left:1160px;top:794px;width:38.1px;background:#e4e4e4"></div>
<div class="t" style="left:1174.10px;top:797.22px;font:400 19px/25px 'Liberation Sans', sans-serif;color:#666;letter-spacing:0.000px;">0</div>
<svg class="ic" style="left:1910.08px;top:793.28px;width:32.64px;height:32.64px" viewBox="0 0 24 24" fill="#555"><path d="M20 2H4c-1.100 0-2 .9-2 2v16c0 1.100.9 2 2 2h16c1.100 0 2-.9 2-2V4c0-1.100-.9-2-2-2zM8 20H4v-4h4v4zm0-6H4v-4h4v4zm0-6H4V4h4v4zm6 12h-4v-4h4v4zm0-6h-4v-4h4v4zm0-6h-4V4h4v4zm6 12h-4v-4h4v4zm0-6h-4v-4h4v4zm0-6h-4V4h4v4z"/></svg>
<div class="abs box" style="left:633px;top:886px;width:1338px;height:420px"></div>
<div class="t" style="left:671.30px;top:917.08px;font:700 22px/29px 'Liberation Sans', sans-serif;color:#222;letter-spacing:0.009px;">10 of 103,947 Transactions</div>
<div class="t" style="left:1614.30px;top:916.68px;font:400 22px/29px 'Liberation Sans', sans-serif;color:#222;letter-spacing:1.526px;">Total:</div>
<div class="t" style="left:1690.50px;top:918.30px;font:400 22.5px/29px 'Liberation Mono', monospace;color:#222;letter-spacing:-0.844px;">$4,145,289.24</div>
<svg class="ic" style="left:1906.88px;top:914.68px;width:32.64px;height:32.64px" viewBox="0 0 24 24" fill="#666"><path d="M12 2C6.480 2 2 6.480 2 12s4.480 10 10 10 10-4.480 10-10S17.520 2 12 2zm0 18c-4.410 0-8-3.590-8-8s3.590-8 8-8 8 3.590 8 8-3.590 8-8 8zm.310-8.860c-1.770-.450-2.340-.940-2.340-1.670 0-.840.790-1.430 2.100-1.430 1.380 0 1.900.660 1.940 1.640h1.710c-.050-1.340-.870-2.570-2.490-2.970V5H10.900v1.690c-1.510.320-2.720 1.300-2.720 2.810 0 1.790 1.490 2.690 3.660 3.210 1.950.460 2.340 1.150 2.340 1.870 0 .530-.390 1.390-2.100 1.390-1.600 0-2.230-.720-2.320-1.640H8.040c.100 1.700 1.360 2.660 2.860 2.970V19h2.340v-1.670c1.520-.290 2.720-1.160 2.730-2.770-.010-2.200-1.900-2.960-3.660-3.420z"/></svg>
<div class="abs" style="left:1866px;top:976px;width:2px;height:304px;background:#e3e3e3"></div>
<div class="t" style="left:671.30px;top:1007.95px;font:700 21.5px/28px 'Liberation Sans', sans-serif;color:#222;letter-spacing:-0.081px;">Date</div>
<div class="t" style="left:928.60px;top:1007.95px;font:700 21.5px/28px 'Liberation Sans', sans-serif;color:#222;letter-spacing:-0.334px;">Description</div>
<div class="t" style="left:1205.50px;top:1007.95px;font:700 21.5px/28px 'Liberation Sans', sans-serif;color:#222;letter-spacing:-1.139px;">Bank</div>
<div class="t" style="left:1482.70px;top:1007.95px;font:700 21.5px/28px 'Liberation Sans', sans-serif;color:#222;letter-spacing:-0.920px;">Currency</div>
<div class="t" style="left:1771.80px;top:1007.95px;font:700 21.5px/28px 'Liberation Sans', sans-serif;color:#222;letter-spacing:-1.009px;">Amount</div>
<div class="abs" style="left:1868px;top:990px;width:102.5px;height:60px;overflow:hidden"><div class="t" style="left:63.70px;top:17.95px;font:700 21.5px/28px 'Liberation Sans', sans-serif;color:#222;letter-spacing:-1.009px;">Amount</div></div>
<div class="abs" style="left:635px;top:1064px;width:1335px;height:2px;background:#dcdcdc"></div>
<div class="t" style="left:671.00px;top:1093.38px;font:400 22px/29px 'Liberation Sans', sans-serif;color:#222;letter-spacing:0.770px;">12/18/2024</div>
<div class="t" style="left:929.60px;top:1093.38px;font:400 22px/29px 'Liberation Sans', sans-serif;color:#222;letter-spacing:0.375px;">Vendor Invoice Paym...</div>
<div class="t" style="left:1205.50px;top:1093.38px;font:400 22px/29px 'Liberation Sans', sans-serif;color:#222;letter-spacing:0.160px;">Chase</div>
<div class="t" style="left:1482.00px;top:1093.38px;font:400 22px/29px 'Liberation Sans', sans-serif;color:#222;letter-spacing:-0.581px;">USD</div>
<div class="t" style="left:1734.30px;top:1095.00px;font:400 22.5px/29px 'Liberation Mono', monospace;color:#222;letter-spacing:-0.815px;">$6,127.72</div>
<div class="abs" style="left:635px;top:1147px;width:1335px;height:2px;background:#dcdcdc"></div>
<div class="t" style="left:671.00px;top:1176.78px;font:400 22px/29px 'Liberation Sans', sans-serif;color:#222;letter-spacing:1.125px;">12/06/2024</div>
<div class="t" style="left:928.60px;top:1176.78px;font:400 22px/29px 'Liberation Sans', sans-serif;color:#222;letter-spacing:0.609px;">Software License Re...</div>
<div class="t" style="left:1205.50px;top:1176.78px;font:400 22px/29px 'Liberation Sans', sans-serif;color:#222;letter-spacing:0.619px;">First National Bank</div>
<div class="t" style="left:1482.00px;top:1176.78px;font:400 22px/29px 'Liberation Sans', sans-serif;color:#222;letter-spacing:-1.081px;">EUR</div>
<div class="t" style="left:1716.60px;top:1178.40px;font:400 22.5px/29px 'Liberation Mono', monospace;color:#f0436f;letter-spacing:-1.382px;">(£8,131.87)</div>
<div class="abs" style="left:1868px;top:1170.9px;width:102.5px;height:40px;overflow:hidden"><div class="t" style="left:93.90px;top:7.50px;font:400 22.5px/29px 'Liberation Mono', monospace;color:#f0436f;letter-spacing:-1.382px;">(£8,131.87)</div></div>
<div class="abs" style="left:635px;top:1230px;width:1335px;height:2px;background:#dcdcdc"></div>
<div class="t" style="left:671.00px;top:1260.18px;font:400 22px/29px 'Liberation Sans', sans-serif;color:#222;letter-spacing:0.729px;">11/21/2024</div>
<div class="t" style="left:928.60px;top:1260.18px;font:400 22px/29px 'Liberation Sans', sans-serif;color:#222;letter-spacing:0.624px;">Client Service Retain...</div>
<div class="t" style="left:1205.50px;top:1260.18px;font:400 22px/29px 'Liberation Sans', sans-serif;color:#222;letter-spacing:-0.781px;">PNC</div>
<div class="t" style="left:1482.00px;top:1260.18px;font:400 22px/29px 'Liberation Sans', sans-serif;color:#222;letter-spacing:-0.581px;">USD</div>
<div class="t" style="left:1734.30px;top:1261.80px;font:400 22.5px/29px 'Liberation Mono', monospace;color:#222;letter-spacing:-0.940px;">$2,815.34</div>
</body></html>
